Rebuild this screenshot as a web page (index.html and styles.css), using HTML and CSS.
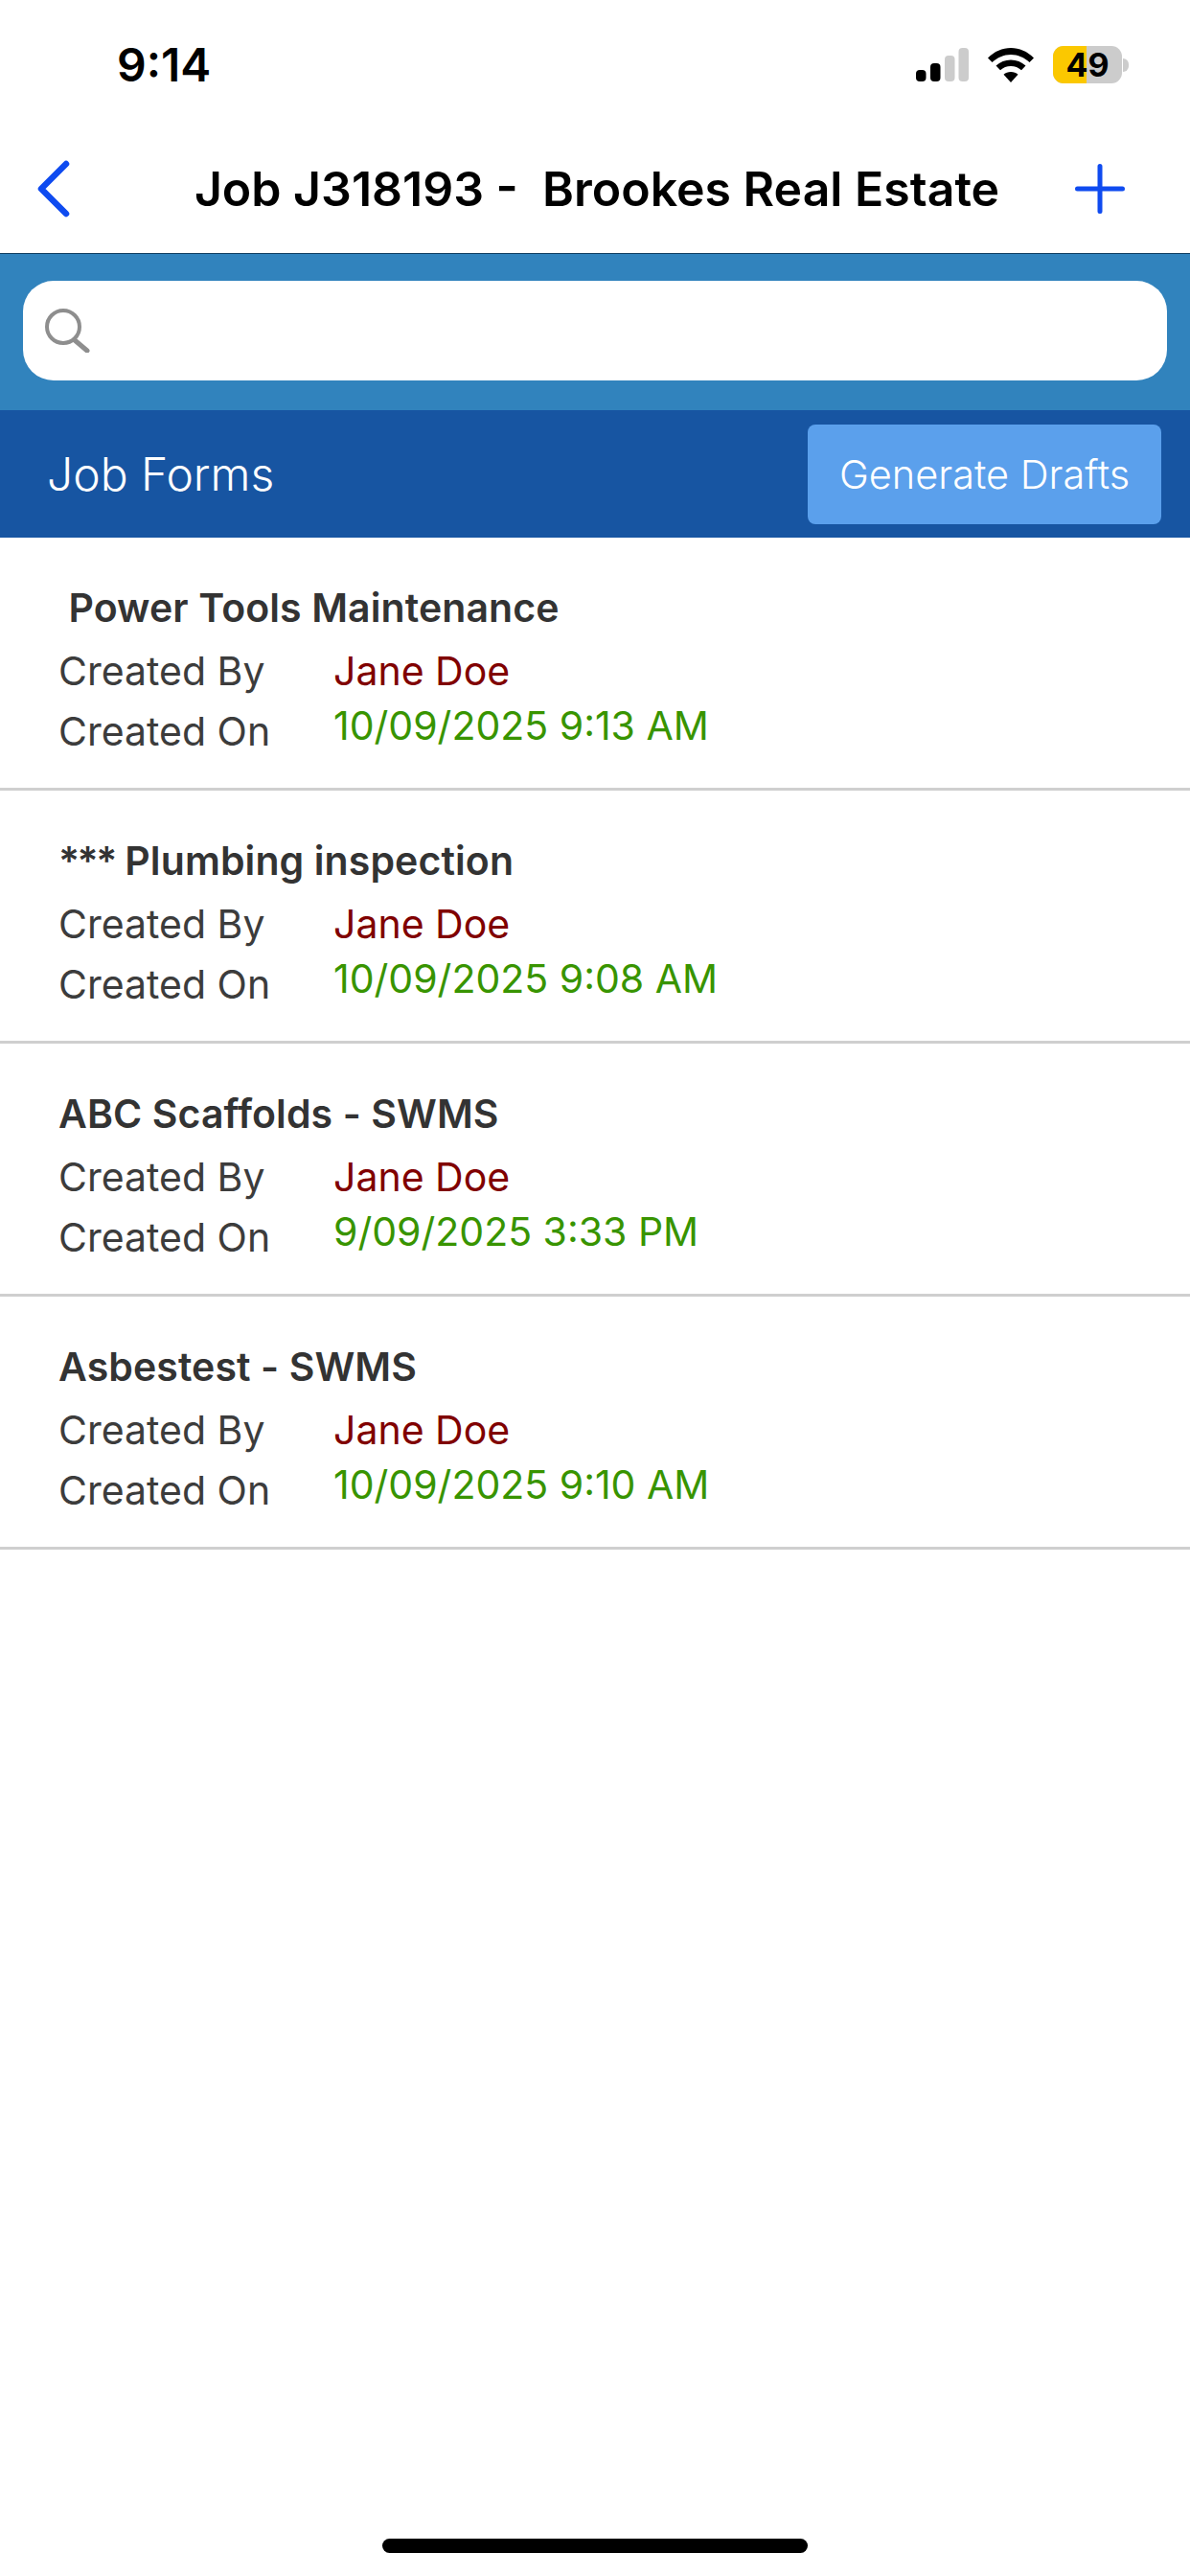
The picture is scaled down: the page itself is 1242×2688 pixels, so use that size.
FILE: index.html
```html
<!DOCTYPE html>
<html lang="en">
<head>
<meta charset="utf-8">
<title>Job Forms</title>
<link rel="stylesheet" href="styles.css">
</head>
<body>
<div class="screen">
  <header class="status">
    <span class="time">9:14</span>
    <div class="status-icons">
      <svg width="55" height="35" viewBox="0 0 55 35"><rect x="0" y="23" width="10.500" height="12" rx="4" fill="#000"/><rect x="15" y="16" width="10.500" height="19" rx="4" fill="#000"/><rect x="30" y="8" width="10.500" height="27" rx="4" fill="#ccc"/><rect x="44.500" y="0" width="10.500" height="35" rx="4" fill="#ccc"/></svg>
      <svg width="48" height="36" viewBox="0 0 48 36"><path d="M24 0C15 0 7 3.500 0 10.500l4.500 4.500C10 10 16.500 7 24 7s14 3 19.500 8L48 10.500C41 3.500 33 0 24 0z" fill="#000"/><path d="M24 12.500c-6 0-11 2-15.500 6l4.500 4.700c3-2.700 6.800-4.200 11-4.200s8 1.500 11 4.200l4.500-4.700C35 14.500 30 12.500 24 12.500z" fill="#000"/><path d="M24 25c-3 0-5.500 1-7.500 2.800L24 36l7.500-8.200C29.500 26 27 25 24 25z" fill="#000"/></svg>
      <div class="battery">
        <div class="battery-body"><span class="battery-level"></span><span class="battery-num">49</span></div>
        <span class="battery-cap"></span>
      </div>
    </div>
  </header>
  <nav class="nav">
    <svg class="nav-back" width="36" height="60" viewBox="0 0 36 60"><path d="M31 4 5 30l26 26" fill="none" stroke="#0f4bf0" stroke-width="6.500" stroke-linecap="round" stroke-linejoin="round"/></svg>
    <h1 class="nav-title">Job J318193 -&nbsp; Brookes Real Estate</h1>
    <svg class="nav-add" width="52" height="52" viewBox="0 0 52 52"><path d="M26 2.500v47M2.500 26h47" fill="none" stroke="#0f4bf0" stroke-width="5" stroke-linecap="round"/></svg>
  </nav>
  <div class="search-band">
    <div class="search">
      <svg width="47" height="46" viewBox="0 0 47 46"><circle cx="19" cy="19" r="17" fill="none" stroke="#8e8e8e" stroke-width="4"/><path d="M31 33l13 11" fill="none" stroke="#8e8e8e" stroke-width="5" stroke-linecap="round"/></svg>
    </div>
  </div>
  <div class="section">
    <h2 class="section-title">Job Forms</h2>
    <button class="generate">Generate Drafts</button>
  </div>
  <ul class="list">
    <li class="row">
      <div class="row-title">&nbsp;Power Tools Maintenance</div>
      <div class="meta"><span class="label">Created By</span><span class="by">Jane Doe</span></div>
      <div class="meta"><span class="label">Created On</span><span class="on">10/09/2025 9:13 AM</span></div>
    </li>
    <li class="row">
      <div class="row-title"><span class="stars">***</span> Plumbing inspection</div>
      <div class="meta"><span class="label">Created By</span><span class="by">Jane Doe</span></div>
      <div class="meta"><span class="label">Created On</span><span class="on">10/09/2025 9:08 AM</span></div>
    </li>
    <li class="row">
      <div class="row-title">ABC Scaffolds - SWMS</div>
      <div class="meta"><span class="label">Created By</span><span class="by">Jane Doe</span></div>
      <div class="meta"><span class="label">Created On</span><span class="on">9/09/2025 3:33 PM</span></div>
    </li>
    <li class="row">
      <div class="row-title">Asbestest - SWMS</div>
      <div class="meta"><span class="label">Created By</span><span class="by">Jane Doe</span></div>
      <div class="meta"><span class="label">Created On</span><span class="on">10/09/2025 9:10 AM</span></div>
    </li>
  </ul>
  <div class="home-bar"><span class="home-pill"></span></div>
</div>
</body>
</html>
```
FILE: styles.css
```css
* { box-sizing: border-box; }
html, body { margin: 0; padding: 0; background: #fff; }
body { font-family: Inter, "Liberation Sans", sans-serif; color: #000; }
.screen { width: 1242px; height: 2688px; display: flex; flex-direction: column; overflow: hidden; background: #fff; }

.status { height: 80px; flex: none; display: flex; justify-content: space-between; align-items: flex-start; padding: 48px 64px 0 122px; }
.time { font-size: 48px; line-height: 40px; font-weight: 600; }
.status-icons { display: flex; align-items: center; gap: 20px; }
.battery { display: flex; align-items: center; gap: 1px; }
.battery-body { position: relative; width: 72px; height: 39px; border-radius: 11px; background: #ccc; overflow: hidden; display: flex; align-items: center; justify-content: center; }
.battery-level { position: absolute; left: 0; top: 0; bottom: 0; width: 35px; background: #fbc800; }
.battery-num { position: relative; font-size: 34px; font-weight: 700; line-height: 1; }
.battery-cap { width: 6px; height: 14px; background: #ccc; border-radius: 0 7px 7px 0; }

.nav { height: 184px; flex: none; display: grid; grid-template-columns: 1fr auto 1fr; align-items: center; padding: 50px 0 0 4px; }
.nav-back { margin-left: 34px; }
.nav-add { justify-self: end; margin-right: 68px; }
.nav-title { margin: 0; font-size: 50px; font-weight: 600; }

.search-band { height: 164px; flex: none; background: #3183bd; border-top: 1px solid #123f62; padding: 28px 24px 0; }
.search { height: 104px; background: #fff; border-radius: 32px; display: flex; align-items: center; padding-left: 23px; }

.section { height: 133px; flex: none; background: #1755a2; display: flex; align-items: center; justify-content: space-between; padding: 0 30px 0 49px; }
.section-title { margin: 0; font-size: 48px; font-weight: 300; color: #fff; }
.generate { width: 369px; height: 104px; border: 0; border-radius: 8px; background: #5ba0ec; color: #fff; font: 300 41.500px Inter, "Liberation Sans", sans-serif; padding: 0; }

.list { list-style: none; margin: 0; padding: 0; }
.row { height: 264px; padding: 48px 61px 0; border-bottom: 3px solid #cfcfcf; }
.row-title { font-size: 41px; line-height: 50px; font-weight: 600; letter-spacing: 0.1px; color: #333; margin-bottom: 10px; }
.stars { letter-spacing: -2.500px; }
.meta { display: flex; align-items: flex-start; font-size: 41px; line-height: 63px; color: #3c3c3c; }
.label { width: 287px; }
.by { color: #800000; }
.on { color: #389400; line-height: 50px; }

.home-bar { margin-top: auto; height: 39px; flex: none; display: flex; justify-content: center; }
.home-pill { width: 444px; height: 15px; background: #000; border-radius: 8px; }
```
